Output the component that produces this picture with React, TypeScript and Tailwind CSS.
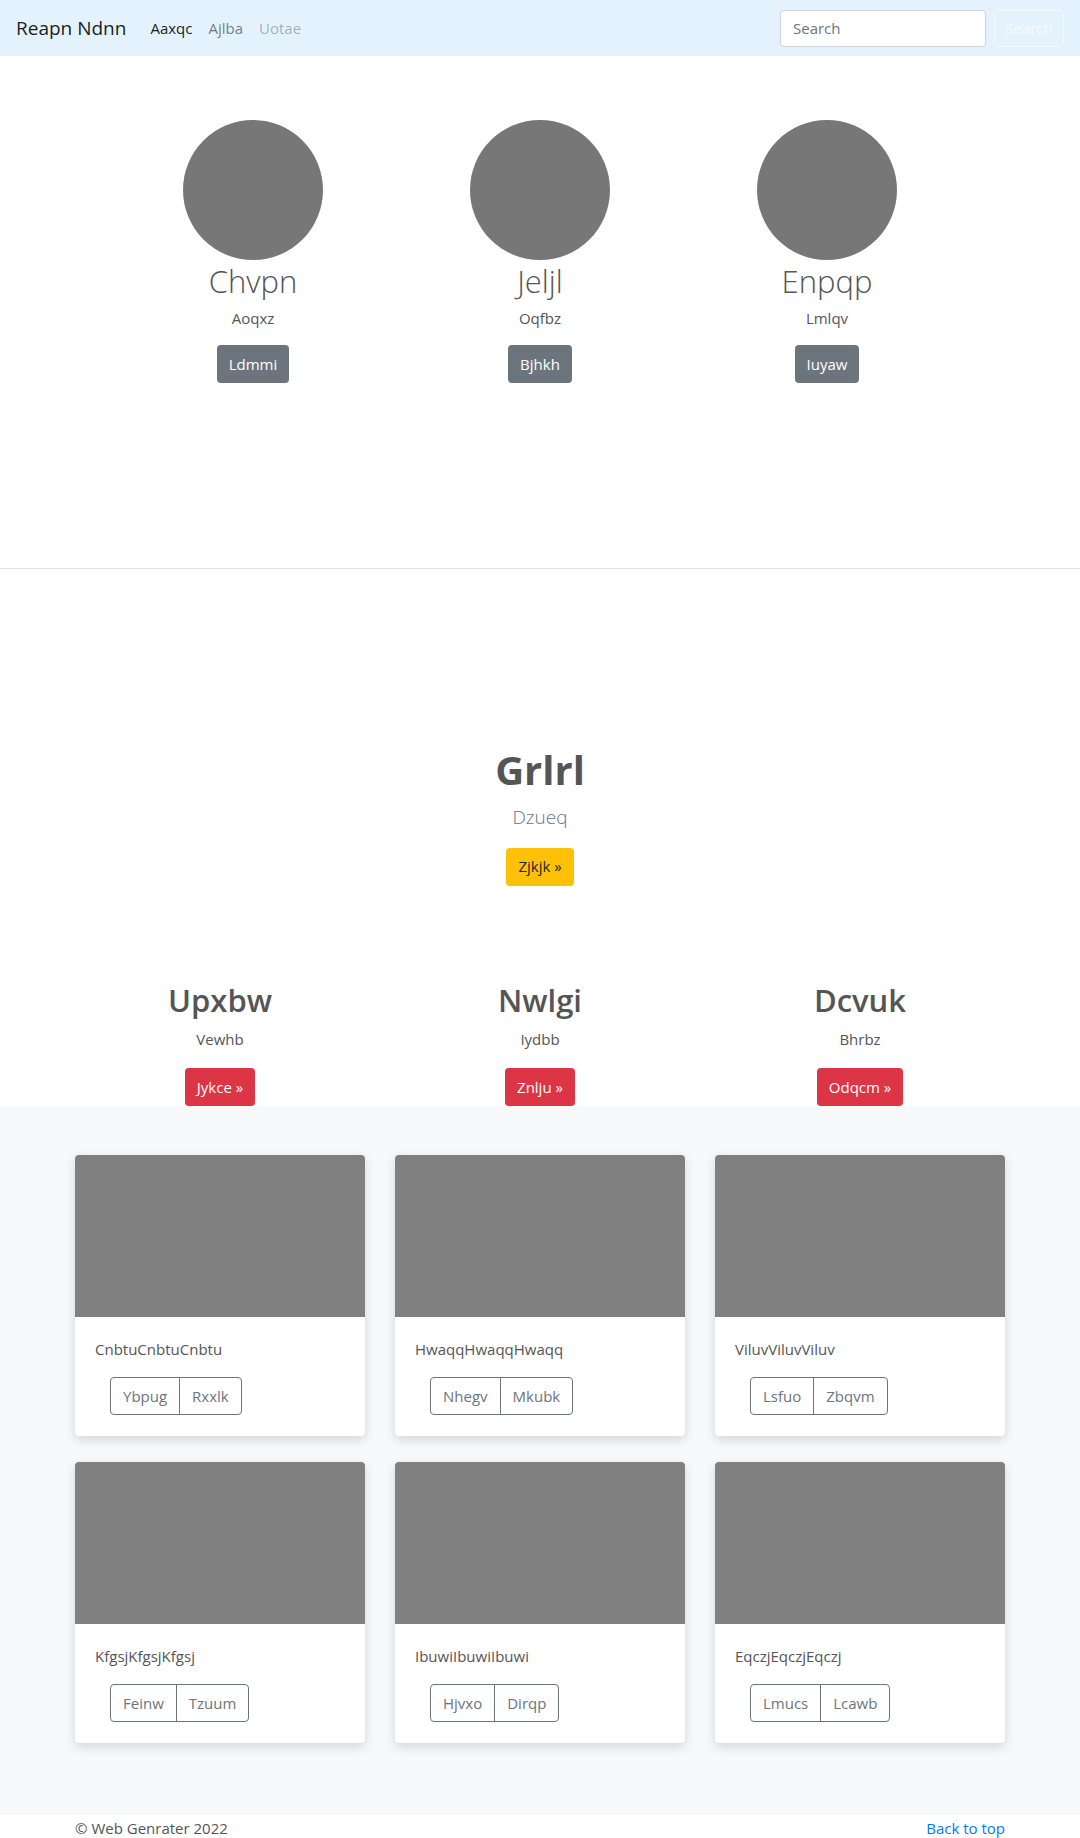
import React from "react";

const people = [
  { name: "Chvpn", sub: "Aoqxz", btn: "Ldmmi" },
  { name: "Jeljl", sub: "Oqfbz", btn: "Bjhkh" },
  { name: "Enpqp", sub: "Lmlqv", btn: "Iuyaw" },
];

const features = [
  { title: "Upxbw", sub: "Vewhb", btn: "Jykce »" },
  { title: "Nwlgi", sub: "Iydbb", btn: "Znlju »" },
  { title: "Dcvuk", sub: "Bhrbz", btn: "Odqcm »" },
];

const cards = [
  { text: "CnbtuCnbtuCnbtu", a: "Ybpug", b: "Rxxlk" },
  { text: "HwaqqHwaqqHwaqq", a: "Nhegv", b: "Mkubk" },
  { text: "ViluvViluvViluv", a: "Lsfuo", b: "Zbqvm" },
  { text: "KfgsjKfgsjKfgsj", a: "Feinw", b: "Tzuum" },
  { text: "IbuwiIbuwiIbuwi", a: "Hjvxo", b: "Dirqp" },
  { text: "EqczjEqczjEqczj", a: "Lmucs", b: "Lcawb" },
];

export default function App() {
  return (
    <div className="font-['Open_Sans',sans-serif] text-[#555] bg-white">
      {/* navbar */}
      <nav className="h-[56px] bg-[#e3f2fd] flex items-center px-4">
        <span className="text-[19px] text-black/90 mr-[24px]">Reapn Ndnn</span>
        <div className="flex gap-4 text-[15px]">
          <span className="text-black/90">Aaxqc</span>
          <span className="text-black/50">Ajlba</span>
          <span className="text-black/30">Uotae</span>
        </div>
        <div className="ml-auto flex items-center gap-2">
          <input
            placeholder="Search"
            className="w-[206px] h-[37px] bg-white border border-[#ced4da] rounded px-3 text-[15px] placeholder:text-[#6c757d] outline-none"
            type="text"
          />
          <button className="h-[37px] w-[70px] border border-[#f8f9fa] rounded text-[#f8f9fa] text-[15px]">
            Search
          </button>
        </div>
      </nav>

      {/* people */}
      <section className="pt-16 h-[512px]">
        <div className="w-[861px] mx-auto grid grid-cols-3">
          {people.map((p) => (
            <div key={p.name} className="flex flex-col items-center">
              <div className="w-[140px] h-[140px] rounded-full bg-[#777]" />
              <h2 className="text-[31px] font-light leading-tight mt-[2px]">{p.name}</h2>
              <p className="text-[15px] mt-[6px]">{p.sub}</p>
              <button className="mt-[16px] bg-[#6c757d] text-white text-[15px] px-3 h-[38px] rounded">
                {p.btn}
              </button>
            </div>
          ))}
        </div>
      </section>
      <hr className="border-t border-[#dee2e6]" />

      {/* hero */}
      <section className="pt-[176px] flex flex-col items-center">
        <h1 className="text-[40px] font-bold leading-tight">Grlrl</h1>
        <p className="text-[19px] font-light text-[#6c757d] mt-[8px]">Dzueq</p>
        <button className="mt-[16px] bg-[#ffc107] text-[#212529] text-[15px] px-3 h-[38px] rounded">
          Zjkjk »
        </button>
      </section>

      {/* features */}
      <section className="pt-[95px]">
        <div className="w-[960px] mx-auto grid grid-cols-3">
          {features.map((f) => (
            <div key={f.title} className="flex flex-col items-center">
              <h2 className="text-[31px] font-semibold leading-tight">{f.title}</h2>
              <p className="text-[15px] mt-[9px]">{f.sub}</p>
              <button className="mt-[17px] bg-[#dc3545] text-white text-[15px] px-3 h-[38px] rounded">
                {f.btn}
              </button>
            </div>
          ))}
        </div>
      </section>

      {/* album */}
      <section className="bg-[#f8f9fa] pt-[49px] pb-[72px]">
        <div className="w-[930px] mx-auto grid grid-cols-3 gap-x-[30px] gap-y-[26px]">
          {cards.map((c) => (
            <div key={c.text} className="bg-white rounded shadow-[0_4px_12px_rgba(0,0,0,0.15)] overflow-hidden">
              <div className="h-[162px] bg-[#808080]" />
              <div className="px-5 pt-5 pb-[21px]">
                <p className="text-[15px] leading-6">{c.text}</p>
                <div className="mt-4 ml-[15px] inline-flex border border-[#6c757d] rounded text-[#6c757d] text-[15px] h-[38px]">
                  <span className="px-3 flex items-center border-r border-[#6c757d]">{c.a}</span>
                  <span className="px-3 flex items-center">{c.b}</span>
                </div>
              </div>
            </div>
          ))}
        </div>
      </section>

      {/* footer */}
      <footer className="w-[930px] mx-auto pt-[2px] pb-6 flex justify-between text-[15px]">
        <span>© Web Genrater 2022</span>
        <span className="text-[#007bff]">Back to top</span>
      </footer>
    </div>
  );
}
